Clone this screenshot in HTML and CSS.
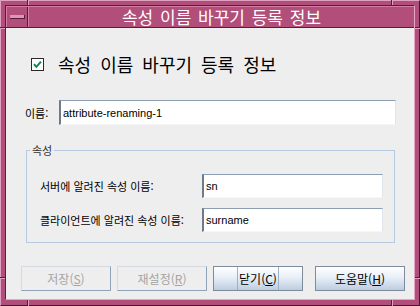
FILE: index.html
```html
<!DOCTYPE html>
<html lang="ko">
<head>
<meta charset="utf-8">
<title>속성 이름 바꾸기 등록 정보</title>
<link rel="stylesheet" href="styles.css">
</head>
<body>
<div class="window">
  <div class="inner">
    <div class="titlebar">
      <div class="menu-btn"><span class="min"></span></div>
      <div class="title">속성 이름 바꾸기 등록 정보</div>
    </div>
    <div class="content">
      <div class="check-row">
        <svg class="checkbox" width="13" height="13" viewBox="0 0 13 13">
          <rect x="0.5" y="0.5" width="12" height="12" fill="#ffffff" stroke="#2a2a2a"/>
          <path d="M3 6.2 L5.3 8.8 L10 3.6" stroke="#0a8a4c" stroke-width="2" fill="none"/>
        </svg>
        <span class="check-label">속성 이름 바꾸기 등록 정보</span>
      </div>
      <div class="name-row">
        <span class="name-label">이름:</span>
        <div class="field field-wide">attribute-renaming-1</div>
      </div>
      <fieldset class="group">
        <legend>속성</legend>
        <div class="row">
          <span class="row-label">서버에 알려진 속성 이름:</span>
          <div class="field field-short">sn</div>
        </div>
        <div class="row">
          <span class="row-label">클라이언트에 알려진 속성 이름:</span>
          <div class="field field-short">surname</div>
        </div>
      </fieldset>
      <div class="buttons">
        <div class="btn disabled">저장(<u>S</u>)</div>
        <div class="btn disabled">재설정(<u>R</u>)</div>
        <div class="btn enabled"><span class="focus">닫기(<u>C</u>)</span></div>
        <div class="btn enabled help">도움말(<u>H</u>)</div>
      </div>
    </div>
  </div>
  <span class="notch n-top nx1"></span>
  <span class="notch n-top nx2"></span>
  <span class="notch n-bottom nx1"></span>
  <span class="notch n-bottom nx2"></span>
  <span class="notch n-left ny1"></span>
  <span class="notch n-left ny2"></span>
  <span class="notch n-right ny1"></span>
  <span class="notch n-right ny2"></span>
</div>
</body>
</html>
```

FILE: styles.css
```css
* { box-sizing: border-box; }
html, body { margin: 0; padding: 0; }
body {
  width: 420px;
  height: 306px;
  overflow: hidden;
  font-family: "Noto Sans CJK KR", "Noto Sans", sans-serif;
  color: #000;
}
.window {
  position: relative;
  width: 420px;
  height: 306px;
  background: #b14e7a;
  border: 1px solid;
  border-color: #e0a2c0 #4e1232 #4e1232 #e0a2c0;
  padding: 4px 4px 5px 4px;
}
.inner {
  height: 100%;
  display: flex;
  flex-direction: column;
  border: 1px solid;
  border-color: #5c1a3c #e4a8c6 #e4a8c6 #5c1a3c;
}
.titlebar {
  height: 22px;
  display: flex;
  border-top: 1px solid #d47ea4;
  border-bottom: 1px solid #5c1a3c;
  background: #b14e7a;
}
.menu-btn {
  width: 22px;
  border-left: 1px solid #d47ea4;
  border-right: 1px solid #5c1a3c;
  display: flex;
  align-items: center;
  justify-content: center;
}
.min {
  width: 15px;
  height: 4px;
  background: #e094b6;
  border-right: 1px solid #5c1a3c;
  border-bottom: 1px solid #5c1a3c;
}
.title {
  flex: 1;
  border-left: 1px solid #d47ea4;
  text-align: center;
  color: #ffffff;
  font-size: 17px;
  line-height: 20px;
  word-spacing: 2px;
}
.content {
  flex: 1;
  background: #eeeeee;
  display: flex;
  flex-direction: column;
  align-items: flex-start;
}
.check-row {
  margin: 25px 0 0 25px;
  height: 22px;
  display: flex;
  align-items: center;
}
.checkbox { display: block; }
.check-label {
  margin-left: 14px;
  font-size: 18px;
  line-height: 22px;
  word-spacing: 4px;
}
.name-row {
  margin: 25px 0 0 19px;
  height: 25px;
  display: flex;
  align-items: center;
}
.name-label {
  width: 34px;
  font-size: 11px;
}
.field {
  height: 25px;
  background: #ffffff;
  border-style: solid;
  border-width: 1px 1px 1px 2px;
  border-color: #8d9db2 #dfe5ec #f6f6f6 #6d7b8c;
  font-family: "Liberation Sans", Arial, sans-serif;
  font-size: 11px;
  padding: 0 0 0 2px;
  display: flex;
  align-items: center;
}
.field-wide { width: 337px; }
.group {
  margin: 19px 0 0 20px;
  width: 369px;
  min-width: 0;
  border: 1px solid #b7cbe0;
  padding: 18px 11px 10px 13px;
}
.group legend {
  margin-left: -10px;
  padding: 0 2px;
  font-size: 11px;
  line-height: 12px;
  color: #333333;
}
.row {
  display: flex;
  align-items: center;
  height: 24px;
}
.row + .row { margin-top: 10px; }
.row-label {
  width: 162px;
  font-size: 11px;
}
.field-short {
  width: 181px;
  height: 24px;
}
.buttons {
  margin: 23px 0 0 15px;
  display: flex;
}
.btn {
  width: 90px;
  height: 25px;
  font-size: 12px;
  display: flex;
  align-items: center;
  justify-content: center;
  border: 1px solid;
}
.btn + .btn { margin-left: 6px; }
.btn.help { margin-left: 12px; }
.btn.disabled {
  background: #eeeeee;
  border-color: #d4dbe2 #8fa3b8 #8fa3b8 #d4dbe2;
  color: #a4a4a4;
}
.btn.enabled {
  background: linear-gradient(#ffffff, #e8eff7 45%, #bccde0);
  border-color: #7d8b9b;
}
.focus {
  height: 100%;
  display: flex;
  align-items: center;
  border-left: 1px solid #9fb0c2;
  border-right: 1px solid #9fb0c2;
  padding: 0 1px;
}
.notch { position: absolute; }
.n-top, .n-bottom {
  width: 2px;
  border-left: 1px solid #5c1a3c;
  border-right: 1px solid #e0a2c0;
}
.n-top { top: -1px; height: 5px; }
.n-bottom { bottom: -1px; height: 6px; }
.n-left, .n-right {
  height: 2px;
  border-top: 1px solid #5c1a3c;
  border-bottom: 1px solid #e0a2c0;
}
.n-left { left: -1px; width: 5px; }
.n-right { right: -1px; width: 5px; }
.nx1 { left: 26px; }
.nx2 { left: 390px; }
.ny1 { top: 26px; }
.ny2 { top: 276px; }
```
